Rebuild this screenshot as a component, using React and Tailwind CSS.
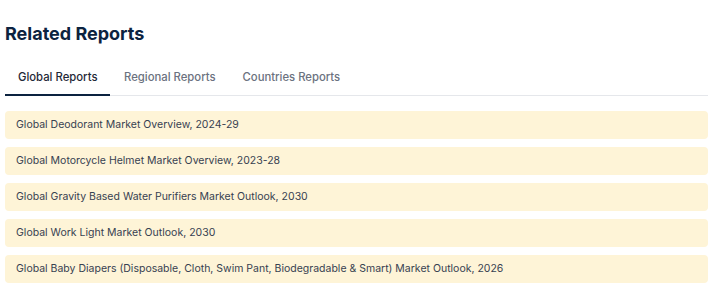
const reports = [
  "Global Deodorant Market Overview, 2024-29",
  "Global Motorcycle Helmet Market Overview, 2023-28",
  "Global Gravity Based Water Purifiers Market Outlook, 2030",
  "Global Work Light Market Outlook, 2030",
  "Global Baby Diapers (Disposable, Cloth, Swim Pant, Biodegradable & Smart) Market Outlook, 2026",
];

const tabs = ["Global Reports", "Regional Reports", "Countries Reports"];

export default function App() {
  return (
    <div className="w-[717px] h-[295px] bg-white pl-[5px] pr-[9px] pt-[22px]" style={{ fontFamily: "Inter, 'Noto Sans', sans-serif" }}>
      <h2 className="text-[18px] leading-[24px] font-bold text-[#0c2340]">Related Reports</h2>

      <div className="mt-[23px] flex border-b border-[#e5e7eb]">
        {tabs.map((t, i) => (
          <div
            key={t}
            className={
              i === 0
                ? "px-[13px] pb-[9px] text-[11.3px] leading-[16px] font-medium text-[#1f2937] border-b-2 border-[#0c2340] -mb-px"
                : "px-[13.5px] pb-[9px] text-[11.3px] leading-[16px] font-medium text-[#6b7280]"
            }
          >
            {t}
          </div>
        ))}
      </div>

      <div className="mt-[15px] flex flex-col gap-[8px]">
        {reports.map((r) => (
          <div key={r} className="h-[28px] flex items-center px-[11px] rounded-[4px] bg-[#fef4d7] text-[10.5px] text-[#374151]">
            {r}
          </div>
        ))}
      </div>
    </div>
  );
}
